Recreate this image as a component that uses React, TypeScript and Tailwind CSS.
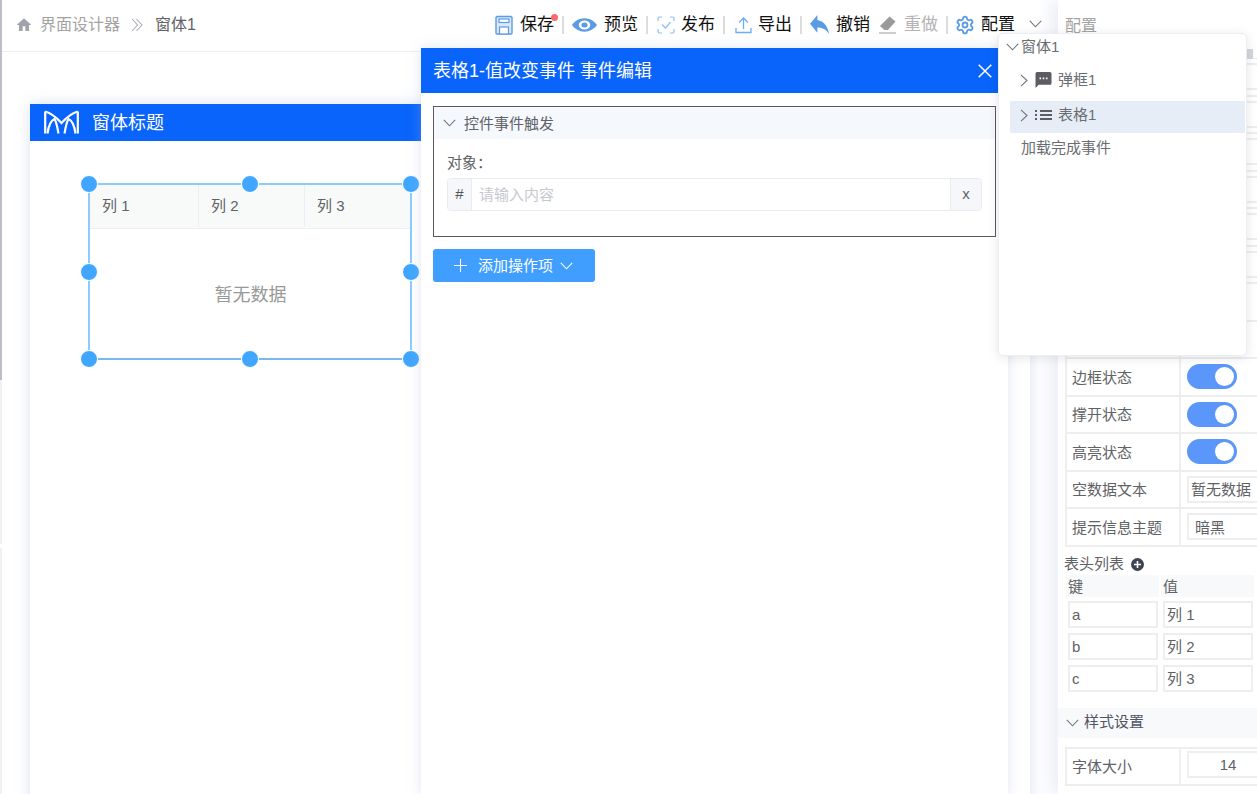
import React from "react";
import { Settings } from "lucide-react";

function ChevD({ className = "", color = "#70747c" }: { className?: string; color?: string }) {
  return (
    <svg className={`shrink-0 ${className}`} width="13" height="8" viewBox="0 0 13 8" fill="none" stroke={color} strokeWidth="1.100">
      <path d="M.8.8l5.700 6 5.700-6" />
    </svg>
  );
}

function ChevR({ className = "" }: { className?: string }) {
  return (
    <svg className={`shrink-0 ${className}`} width="8" height="13" viewBox="0 0 8 13" fill="none" stroke="#70747c" strokeWidth="1.100">
      <path d="M1 .8l6 5.700-6 5.700" />
    </svg>
  );
}

function PlusLine({ className = "" }: { className?: string }) {
  return (
    <svg className={`shrink-0 ${className}`} width="13" height="13" viewBox="0 0 13 13" fill="none" stroke="#fff" strokeWidth="1.100">
      <path d="M6.500 0v13M0 6.500h13" />
    </svg>
  );
}

function Tool({ icon, label, dim, iconGap = "gap-[7px]" }: { icon: React.ReactNode; label: React.ReactNode; dim?: boolean; iconGap?: string }) {
  return (
    <div className={`flex items-center ${iconGap}`}>
      {icon}
      <span className={`text-[17px] leading-[24px] relative ${dim ? "text-[#b4b4b4]" : "text-[#111]"}`}>{label}</span>
    </div>
  );
}

const Divider = () => <div className="w-[2px] h-[18px] bg-[#dcdcdc] ml-[8px] mr-[8px]" />;

function Handle({ className }: { className: string }) {
  return <div className={`absolute w-[16px] h-[16px] rounded-full bg-[#40a6ff] border border-white box-content ${className}`} />;
}

function Row({ label, children }: { label?: string; children?: React.ReactNode }) {
  return (
    <div className="flex h-[37.5px] border-b-2 border-[#eeeeee] w-[200px]">
      <div className="w-[116px] shrink-0 border-r-2 border-l-2 border-[#eeeeee] pl-[5px] pt-[2px] flex items-center text-[15px] text-[#606266] whitespace-nowrap">{label}</div>
      <div className="flex-1 pl-[6px] flex items-center min-w-0">{children}</div>
    </div>
  );
}

function Switch() {
  return (
    <div className="w-[50px] h-[25px] rounded-full bg-[#5b96fb] flex items-center justify-end pr-[3px]">
      <div className="w-[19px] h-[19px] rounded-full bg-white" />
    </div>
  );
}

function Field({ children, className = "" }: { children?: React.ReactNode; className?: string }) {
  return <div className={`h-[27px] w-[90px] shrink-0 border-2 border-[#eeeeee] pt-[2px] flex items-center text-[15px] text-[#606266] whitespace-nowrap overflow-hidden ${className}`}>{children}</div>;
}

function KV({ k, v }: { k: string; v: string }) {
  return (
    <div className="flex gap-[5px] pl-[10px] mb-[5px]">
      <Field className="pl-[2px]">{k}</Field>
      <Field className="pl-[2px]">{v}</Field>
    </div>
  );
}

export default function App() {
  return (
    <div className="relative flex w-[1257px] h-[794px] overflow-hidden bg-white [font-family:'Liberation_Sans','Noto_Sans_CJK_SC',sans-serif]">
      {/* left edge */}
      <div className="w-[2px] shrink-0 flex flex-col">
        <div className="h-[380px] bg-[#bcbfc8]" />
        <div className="h-[164px] bg-[#f1f1f1]" />
        <div className="h-[4px] bg-white" />
        <div className="flex-1 bg-[#f1f1f1]" />
      </div>

      {/* main column */}
      <div className="w-[1056px] shrink-0 flex flex-col">
        <header className="h-[52px] shrink-0 border-b border-[#ebeef2] flex items-center justify-between pl-[14px] pr-[16px] pb-[2px]">
          <div className="flex items-center">
            <svg width="16" height="16" viewBox="0 0 24 24" fill="#a0a3a9"><path d="M10 21v-7h4v7h5.500v-9H23L12 2 1 12h3.500v9z" /></svg>
            <span className="ml-[8px] text-base text-[#a3a3a3]">界面设计器</span>
            <svg className="ml-[11px]" width="12" height="14" viewBox="0 0 12 14" fill="none" stroke="#a9acb4" strokeWidth="1.100">
              <path d="M1 1l5.500 6L1 13M5.500 1L11 7l-5.500 6" />
            </svg>
            <span className="ml-[12px] text-base text-[#606266]">窗体1</span>
          </div>
          <div className="flex items-center">
            <Tool
              icon={
                <svg width="18" height="20" viewBox="0 0 18 20" fill="none">
                  <path d="M2 1.500h14l1 1V18a1 1 0 0 1-1 1H2a1 1 0 0 1-1-1V2.500z" fill="#dbe9fb" stroke="#5c9ce6" strokeWidth="1.400" />
                  <rect x="4" y="4" width="10" height="3.500" fill="#fff" stroke="#5c9ce6" strokeWidth="1.200" />
                  <rect x="4.500" y="12" width="9" height="7" fill="#fff" stroke="#5c9ce6" strokeWidth="1.200" />
                </svg>
              }
              label={
                <>
                  保存
                  <span className="absolute right-[-4px] top-[1px] w-[7px] h-[7px] rounded-full bg-[#f56c6c]" />
                </>
              }
            />
            <Divider />
            <Tool
              icon={
                <svg width="25" height="20" viewBox="0 0 24 24" fill="#5a9be6" preserveAspectRatio="none">
                  <path d="M12 4C7 4 2.700 7.300 0 12c2.700 4.700 7 8 12 8s9.300-3.300 12-8c-2.700-4.700-7-8-12-8zm0 13.500a5.500 5.500 0 1 1 0-11 5.500 5.500 0 0 1 0 11zm0-8.500a3 3 0 1 0 0 6 3 3 0 0 0 0-6z" />
                </svg>
              }
              label="预览"
            />
            <Divider />
            <div className="ml-[1px]">
              <Tool
                iconGap="gap-[6px]"
                icon={
                  <svg width="18" height="18" viewBox="0 0 18 18" fill="none" stroke="#8fbdf2" strokeWidth="1.200">
                    <path d="M1 5V2.500A1.500 1.500 0 0 1 2.500 1H5M13 1h2.500A1.500 1.500 0 0 1 17 2.500V5M17 13v2.500a1.500 1.500 0 0 1-1.500 1.500H13M5 17H2.500A1.500 1.500 0 0 1 1 15.500V13" />
                    <path d="M5 8.500l3.500 3.500 5-6" />
                  </svg>
                }
                label="发布"
              />
            </div>
            <Divider />
            <div className="ml-[2px]">
              <Tool
                iconGap="gap-[6px]"
                icon={
                  <svg width="17" height="18" viewBox="0 0 17 18" fill="none" stroke="#6aaef5" strokeWidth="1.300">
                    <path d="M8.500 13V2M4 6.500L8.500 2 13 6.500" />
                    <path d="M1 12v4.500h15V12" />
                  </svg>
                }
                label="导出"
              />
            </div>
            <Divider />
            <Tool
              icon={
                <svg width="19" height="19" viewBox="3 5 18 15" fill="#5a9be6" preserveAspectRatio="none">
                  <path d="M10 9V5l-7 7 7 7v-4.100c5 0 8.500 1.600 11 5.100-1-5-4-10-11-11z" />
                </svg>
              }
              label="撤销"
            />
            <div className="ml-[9px]">
              <Tool
                iconGap="gap-[8px]"
                dim
                icon={
                  <svg width="17" height="18" viewBox="0 0 17 18" fill="#9a9a9a">
                    <path d="M10.500.5l6 5-7.500 8.500H5.500L1 10z" />
                    <path d="M0 16.500h17v1H0z" />
                  </svg>
                }
                label="重做"
              />
            </div>
            <Divider />
            <div className="-ml-[1px]">
              <Tool iconGap="gap-[6px]" icon={<Settings className="w-[20px] h-[20px] text-[#5a9be6]" strokeWidth={2.200} />} label="配置" />
            </div>
            <ChevD className="ml-[14px] mb-[2px]" />
          </div>
        </header>

        <div className="flex-1 pl-[28px] pt-[52px] min-h-0">
          <div className="w-[1000px] h-[700px] bg-white shadow-[0_0_14px_rgba(170,180,220,0.4)]">
            <div className="h-[37px] bg-[#0964fb] flex items-center pl-[14px]">
              <svg width="35" height="25" viewBox="0 0 35 25" fill="none" stroke="#fff" strokeWidth="2.200">
                <path d="M1.200 1.500V23.500M33.800 1.500V23.500" />
                <path d="M1.200 1.500C7 3 12 7 17.500 13 23 7 28 3 33.800 1.500" />
                <path d="M3.500 23.500C4.500 16 7 10.500 10.500 9 12.500 12 13.500 18 14.500 23.500" />
                <path d="M31.500 23.500C30.500 16 28 10.500 24.500 9 22.500 12 21.500 18 20.500 23.500" />
              </svg>
              <span className="ml-[13px] text-lg text-white">窗体标题</span>
            </div>
            <div className="pl-[58px] pt-[42px]">
              <div className="relative w-[324px] h-[177px] border-2 border-[#8ccaff] border-b-[#7ab8f2]">
                <div className="flex h-[44px] bg-[#f8fafa] border-b border-[#ebeef5] text-[15px] text-[#606266] pb-[1px]">
                  <div className="w-[109px] pl-[12px] flex items-center border-r border-[#ebeef5]">列 1</div>
                  <div className="w-[106px] pl-[12px] flex items-center border-r border-[#ebeef5]">列 2</div>
                  <div className="flex-1 pl-[12px] flex items-center">列 3</div>
                </div>
                <div className="h-[129px] pt-[3px] pl-[1px] flex items-center justify-center text-lg text-[#999999]">暂无数据</div>
                <Handle className="left-[-10px] top-[-10px]" />
                <Handle className="left-[151px] top-[-10px]" />
                <Handle className="right-[-10px] top-[-10px]" />
                <Handle className="left-[-10px] top-[78px]" />
                <Handle className="right-[-10px] top-[78px]" />
                <Handle className="left-[-10px] bottom-[-10px]" />
                <Handle className="left-[151px] bottom-[-10px]" />
                <Handle className="right-[-10px] bottom-[-10px]" />
              </div>
            </div>
          </div>
        </div>
      </div>

      {/* right panel */}
      <aside className="relative z-0 w-[199px] shrink-0 bg-white shadow-[-8px_0_14px_rgba(200,208,235,0.35)] overflow-hidden">
        <div className="h-[58px] pl-[7px] pt-[14px] text-base leading-[24px] text-[#a3a3a3]">配置</div>
        <div className="absolute left-[189px] top-[49px] w-[6px] h-[10px] bg-[#d3d6dc]" />
        <div className="pl-[7px] border-t border-[#eeeeee]">
          {[0, 1, 2, 3, 4, 5].map((i) => (
            <Row key={i}>
              <Field />
            </Row>
          ))}
          {[0, 1].map((i) => (
            <Row key={i} />
          ))}
          <Row label="边框状态"><Switch /></Row>
          <Row label="撑开状态"><Switch /></Row>
          <Row label="高亮状态"><Switch /></Row>
          <Row label="空数据文本"><Field className="pl-[2px]">暂无数据</Field></Row>
          <Row label="提示信息主题"><Field className="pl-[6px]">暗黑</Field></Row>
        </div>
        <div className="pl-[6px] mt-[8px] h-[20px] flex items-center text-[15px] text-[#606266]">
          表头列表
          <span className="ml-[7px] w-[13px] h-[13px] rounded-full bg-[#3f4454] flex items-center justify-center">
            <svg width="7" height="7" viewBox="0 0 7 7" fill="none" stroke="#fff" strokeWidth="1.600"><path d="M3.500 0v7M0 3.500h7" /></svg>
          </span>
        </div>
        <div className="flex gap-[2px] pl-[8px] h-[22px] text-[15px] text-[#606266]">
          <div className="w-[93px] bg-[#f8f9fa] pl-[2px] leading-[24px]">键</div>
          <div className="w-[93px] bg-[#f8f9fa] pl-[2px] leading-[24px]">值</div>
        </div>
        <div className="mt-[4px]">
          <KV k="a" v="列 1" />
          <KV k="b" v="列 2" />
          <KV k="c" v="列 3" />
        </div>
        <div className="mt-[16px] h-[30px] bg-[#f8f9fa] flex items-center pl-[8px] text-[15px] text-[#505566]">
          <ChevD />
          <span className="ml-[5px]">样式设置</span>
        </div>
        <div className="pl-[7px] mt-[9px]">
          <div className="border-t-2 border-[#eeeeee]">
            <Row label="字体大小">
              <Field className="pr-[8px] justify-center mb-[4px]">14</Field>
            </Row>
          </div>
        </div>
      </aside>

      {/* event dialog */}
      <div className="absolute left-[421px] top-[48px] bottom-0 w-[587px] bg-white shadow-[0_0_12px_rgba(170,180,220,0.35)]">
        <div className="h-[45px] bg-[#0964fb] flex items-center justify-between pl-[12px] pr-[16px]">
          <span className="text-lg text-white">表格1-值改变事件 事件编辑</span>
          <svg width="14" height="14" viewBox="0 0 14 14" fill="none" stroke="#fff" strokeWidth="1.500"><path d="M.7.7l12.600 12.600M13.300.7L.7 13.300" /></svg>
        </div>
        <div className="px-[12px] pt-[13px]">
          <div className="h-[131px] border border-[#5f5560]">
            <div className="h-[32px] bg-[#f5f8fd] flex items-center pl-[9px] text-[15px] text-[#606266]">
              <ChevD />
              <span className="ml-[8px] pt-[2px]">控件事件触发</span>
            </div>
            <div className="px-[13px] pt-[15px]">
              <div className="text-[15px] leading-[18px] text-[#606266]">对象：</div>
              <div className="mt-[6px] h-[33px] flex border border-[#e9ebef] rounded-[4px] text-[15px] overflow-hidden">
                <div className="w-[24px] bg-[#f5f7fa] flex items-center justify-center border-r border-[#e9ebef] text-[#555]">#</div>
                <div className="flex-1 pl-[7px] pt-[2px] flex items-center text-[#c6c9cf]">请输入内容</div>
                <div className="w-[31px] bg-[#f5f7fa] flex items-center justify-center border-l border-[#e9ebef] text-[#606266]">x</div>
              </div>
            </div>
          </div>
          <div className="mt-[12px] w-[162px] h-[33px] rounded-[3px] bg-[#409eff] flex items-center pl-[21px] text-[15px] text-white">
            <PlusLine />
            <span className="ml-[11px] pt-[2px]">添加操作项</span>
            <ChevD className="ml-[7px]" color="#fff" />
          </div>
        </div>
      </div>

      {/* tree popover */}
      <div className="absolute left-[998px] top-[33px] w-[249px] h-[323px] bg-white rounded-[5px] border border-[#ebeef5] shadow-[0_2px_12px_rgba(0,0,0,0.1)] text-[15px] text-[#6b6d72] pt-[1px] pr-[1px]">
        <div className="h-[24px] flex items-center pl-[7px]">
          <ChevD />
          <span className="ml-[2px]">窗体1</span>
        </div>
        <div className="h-[38px] mt-[4px] flex items-center pl-[21px] pb-[4px]">
          <ChevR />
          <svg className="ml-[7px]" width="17" height="16" viewBox="2 2 20 20" fill="#5b5d63">
            <path d="M20 2H4c-1.100 0-2 .9-2 2v18l4-4h14c1.100 0 2-.9 2-2V4c0-1.100-.9-2-2-2zM9 11H7V9h2v2zm4 0h-2V9h2v2zm4 0h-2V9h2v2z" />
          </svg>
          <span className="ml-[6px]">弹框1</span>
        </div>
        <div className="h-[32px] ml-[11px] bg-[#e7edf7] flex items-start pt-[4px] pl-[10px]">
          <div className="h-[20px] flex items-center">
            <ChevR />
            <svg className="ml-[7px]" width="17" height="12" viewBox="0 0 17 12" fill="#5b5d63">
              <path d="M0 1h2v2H0zM0 5h2v2H0zM0 9h2v2H0zM5 1h12v2H5zM5 5h12v2H5zM5 9h12v2H5z" />
            </svg>
            <span className="ml-[6px]">表格1</span>
          </div>
        </div>
        <div className="pl-[22px] mt-[5px] leading-[20px]">加载完成事件</div>
      </div>
    </div>
  );
}
